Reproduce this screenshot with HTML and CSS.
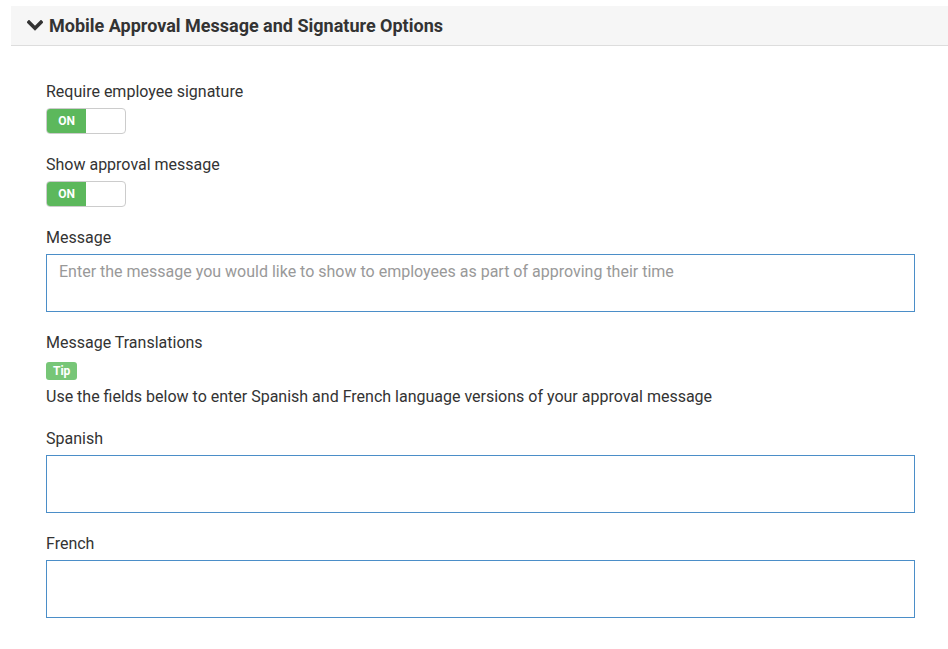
FILE: index.html
```html
<!DOCTYPE html>
<html>
<head>
<meta charset="utf-8">
<link rel="stylesheet" href="styles.css">
</head>
<body>
<div class="panel">
  <div class="panel-header">
    <svg class="chev" width="16" height="11" viewBox="0 0 16 11"><polyline points="2,2.2 8,8.2 14,2.2" fill="none" stroke="#333" stroke-width="3.6" stroke-linecap="square"/></svg>
    <span class="title">Mobile Approval Message and Signature Options</span>
  </div>
  <div class="panel-body">
    <div class="field">
      <div class="label">Require employee signature</div>
      <div class="toggle"><span class="on">ON</span><span class="off"></span></div>
    </div>
    <div class="field">
      <div class="label">Show approval message</div>
      <div class="toggle"><span class="on">ON</span><span class="off"></span></div>
    </div>
    <div class="field">
      <div class="label">Message</div>
      <textarea class="box" placeholder="Enter the message you would like to show to employees as part of approving their time"></textarea>
    </div>
    <div class="field tr">
      <div class="label">Message Translations</div>
      <span class="tip">Tip</span>
      <div class="help">Use the fields below to enter Spanish and French language versions of your approval message</div>
    </div>
    <div class="field">
      <div class="label">Spanish</div>
      <textarea class="box"></textarea>
    </div>
    <div class="field">
      <div class="label">French</div>
      <textarea class="box"></textarea>
    </div>
  </div>
</div>
</body>
</html>
```

FILE: styles.css
```css
* { box-sizing: border-box; }
html, body { margin: 0; padding: 0; background: #fff; }
body { font-family: Roboto, "Noto Sans", sans-serif; color: #333; }
.panel { margin: 6px 0 0 11px; }
.panel-header {
  height: 40px;
  background: #f6f6f6;
  border-bottom: 1px solid #dddddd;
  display: flex;
  align-items: center;
  padding-left: 16px;
  padding-bottom: 1px;
}
.chev { margin-right: 6px; margin-top: 1px; }
.title { font-size: 18px; font-weight: 700; color: #333; }
.panel-body { padding: 34px 33px 0 35px; display: flex; flex-direction: column; }
.field { display: flex; flex-direction: column; align-items: flex-start; margin-bottom: 19px; }
.label { font-size: 16px; line-height: 22px; padding-top: 1px; margin-bottom: 5px; }
.toggle {
  width: 80px; height: 26px;
  border: 1px solid #cccccc;
  border-radius: 4px;
  display: flex;
  overflow: hidden;
  background: #fff;
}
.toggle .on {
  width: 39px;
  background: #5cb85c;
  color: #fff;
  font-size: 12px;
  font-weight: 700;
  display: flex; align-items: center; justify-content: center;
}
.toggle .off { flex: 1; }
.box {
  width: 869px; height: 58px;
  border: 1px solid #4b8ec8;
  border-radius: 0;
  resize: none;
  font-family: Roboto, "Noto Sans", sans-serif;
  font-size: 16px;
  line-height: 22px;
  padding: 6px 12px;
  color: #333;
  outline: none;
  display: block;
}
.box::placeholder { color: #999; }
.tr .label { margin-bottom: 8px; }
.tip {
  background: #77c677;
  color: #fff;
  font-size: 12px;
  font-weight: 700;
  border-radius: 3px;
  height: 18px;
  line-height: 18px;
  padding: 0 7px;
  margin-bottom: 5px;
}
.help { font-size: 16px; line-height: 22px; padding-top: 1px; }
.field.tr { margin-bottom: 19px; }
```
